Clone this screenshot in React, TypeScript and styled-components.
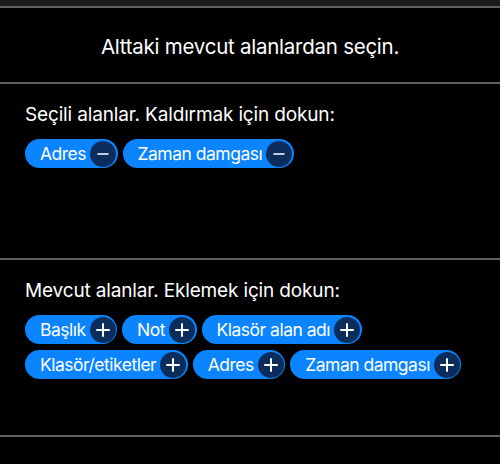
import React from "react";
import styled, { createGlobalStyle } from "styled-components";

const Global = createGlobalStyle`
  html, body { margin: 0; padding: 0; background: #000; }
  body { font-family: "Inter", "Liberation Sans", sans-serif; -webkit-font-smoothing: antialiased; }
`;

const Page = styled.div`
  width: 500px;
  height: 464px;
  background: #000;
  color: #fff;
  display: flex;
  flex-direction: column;
  overflow: hidden;
`;

const TopStrip = styled.div`
  height: 6px;
  background: #1c1c1e;
`;

const Divider = styled.div`
  height: 2px;
  background: #606063;
  flex-shrink: 0;
`;

const Header = styled.div`
  height: 74px;
  display: flex;
  align-items: center;
  justify-content: center;
  font-size: 20.5px;
  letter-spacing: -0.25px;
  padding-top: 3px;
  box-sizing: border-box;
`;

const Section = styled.div<{ $h: number }>`
  height: ${(p) => p.$h}px;
  box-sizing: border-box;
  padding: 20px 25px 0;
  display: flex;
  flex-direction: column;
`;

const Label = styled.div`
  font-size: 19px;
  letter-spacing: -0.15px;
  line-height: 22px;
  margin-bottom: 13px;
`;

const ChipWrap = styled.div`
  display: flex;
  flex-wrap: wrap;
  column-gap: 5px;
  row-gap: 6px;
`;

const Chip = styled.div`
  height: 29px;
  border-radius: 15px;
  background: #0a84ff;
  display: flex;
  align-items: center;
  padding: 0 1.5px 0 15px;
  gap: 4px;
  font-size: 17.5px;
  letter-spacing: -0.5px;
  color: #fff;
  box-sizing: border-box;
`;

const Btn = styled.span`
  width: 26px;
  height: 26px;
  border-radius: 50%;
  background: #0b2d5c;
  display: flex;
  align-items: center;
  justify-content: center;
`;

const Icon = ({ plus }: { plus: boolean }) => (
  <svg width="16" height="16" viewBox="0 0 16 16">
    {plus ? (
      <>
        <path d="M2 8h12" stroke="#fff" strokeWidth="2" strokeLinecap="round" />
        <path d="M8 2v12" stroke="#fff" strokeWidth="2" strokeLinecap="round" />
      </>
    ) : (
      <path d="M3 8h10" stroke="#fff" strokeWidth="1.5" strokeLinecap="round" />
    )}
  </svg>
);

const ChipItem = ({ text, plus }: { text: string; plus: boolean }) => (
  <Chip>
    <span>{text}</span>
    <Btn>
      <Icon plus={plus} />
    </Btn>
  </Chip>
);

export default function App() {
  const selected = ["Adres", "Zaman damgası"];
  const available = ["Başlık", "Not", "Klasör alan adı", "Klasör/etiketler", "Adres", "Zaman damgası"];
  return (
    <Page>
      <Global />
      <TopStrip />
      <Divider />
      <Header>Alttaki mevcut alanlardan seçin.</Header>
      <Divider />
      <Section $h={174}>
        <Label>Seçili alanlar. Kaldırmak için dokun:</Label>
        <ChipWrap>
          {selected.map((t) => (
            <ChipItem key={t} text={t} plus={false} />
          ))}
        </ChipWrap>
      </Section>
      <Divider />
      <Section $h={175}>
        <Label>Mevcut alanlar. Eklemek için dokun:</Label>
        <ChipWrap>
          {available.map((t, i) => (
            <ChipItem key={i} text={t} plus />
          ))}
        </ChipWrap>
      </Section>
      <Divider />
    </Page>
  );
}
